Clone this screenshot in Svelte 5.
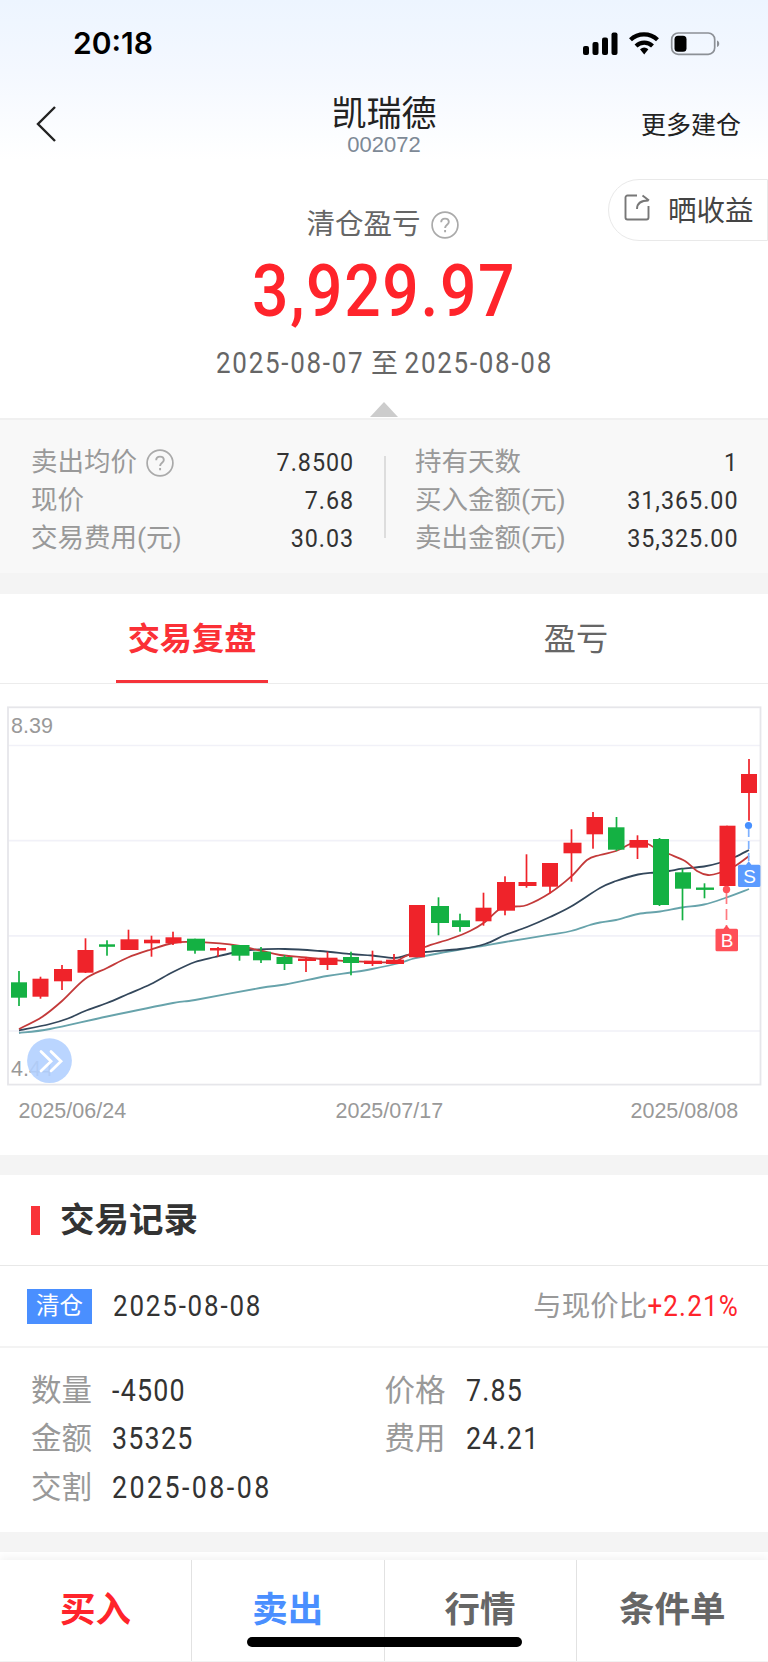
<script>
	// --------------- Position ---------------
	const leftStats = [
		{ label: '卖出均价', value: '7.8500', help: true },
		{ label: '现价', value: '7.68' },
		{ label: '交易费用(元)', value: '30.03' }
	];
	const rightStats = [
		{ label: '持有天数', value: '1' },
		{ label: '买入金额(元)', value: '31,365.00' },
		{ label: '卖出金额(元)', value: '35,325.00' }
	];
	const details = [
		{ label: '数量', value: '-4500' },
		{ label: '价格', value: '7.85' },
		{ label: '金额', value: '35325' },
		{ label: '费用', value: '24.21' },
		{ label: '交割', value: '2025-08-08', date: true }
	];

	let tabs = ['交易复盘', '盈亏'];
	let activeTab = 0;

	// --------------- K line chart ---------------
	// up, wick x, body left, body right, body top, body bottom, high, low
	const candles = [
		[0, 19, 11, 27, 982.3, 997.7, 971, 1006],
		[1, 40.5, 32.5, 48.5, 978.7, 996.7, 976.7, 998.7],
		[1, 62, 54, 72, 969, 981.3, 965, 990],
		[1, 85.5, 77.5, 93.5, 950, 972.7, 938.3, 973],
		[0, 107, 99, 115, 944.3, 946.8, 940.3, 955.7],
		[1, 128.5, 120.5, 138.5, 939.3, 950, 929.7, 950],
		[1, 151.5, 144, 160, 939.7, 943.3, 935.7, 956.7],
		[1, 173, 165.5, 181.5, 937.3, 943.3, 931.7, 945],
		[0, 195, 187, 205, 938.7, 950.7, 938.7, 953.7],
		[1, 218, 210, 226, 948, 950.5, 947, 956.7],
		[0, 239.5, 231.5, 249.5, 945, 955.7, 945, 960.7],
		[0, 261, 253, 271, 951.7, 960.3, 947, 963],
		[0, 284.5, 276.5, 292.5, 957, 964, 955, 970],
		[1, 306, 298, 316, 958.5, 961, 957, 972],
		[1, 327.5, 319.5, 337.5, 957.7, 965, 951.7, 970],
		[0, 351, 343, 359, 957, 963, 951.7, 975.3],
		[1, 372.5, 364, 382, 960.7, 964, 950.7, 966],
		[1, 394, 386, 404, 959.7, 964, 954, 964],
		[1, 417, 409, 425, 905, 957.3, 905, 957.3],
		[0, 438.5, 431, 449, 906, 923, 897.3, 935.3],
		[0, 460, 452, 470, 920.3, 927, 913.7, 931.7],
		[1, 483.5, 475.5, 491.5, 907.7, 921.3, 892.7, 925.7],
		[1, 505, 497, 515, 882, 910.7, 876.3, 915.3],
		[1, 526.5, 518.5, 536.5, 882, 886, 854.3, 887.7],
		[1, 550, 542, 558, 863, 886.7, 863, 893.3],
		[1, 571.5, 563.5, 581.5, 842.7, 853.3, 829.3, 881.7],
		[1, 593, 586.5, 603, 817, 834.3, 812, 848.7],
		[0, 616.5, 608, 624.5, 827.3, 849.7, 817, 851],
		[1, 637.5, 629.5, 648, 840, 847.7, 835.3, 859],
		[0, 659.5, 653, 669, 839, 905, 838, 906],
		[0, 682.5, 675, 691, 872.3, 888.7, 868.7, 920.3],
		[0, 704.5, 696, 714, 887.5, 889.9, 883.3, 898.3],
		[1, 727, 719.5, 735.5, 825.7, 886, 825.7, 886],
		[1, 749, 741, 757, 774, 793, 759, 820.7]
	];

	const averages = [
		{
			color: '#67a3ab',
			points: [[19, 1033], [50, 1029], [107, 1016.5], [173, 1003], [195, 1000], [260, 988], [285, 984.5], [327, 976], [351, 972.5], [372, 969], [400, 963], [412, 959], [430, 955], [460, 949.5], [485, 945.5], [505, 942], [550, 934.7], [571, 931], [590, 925], [600, 922.5], [616, 920], [638, 914], [660, 911.5], [682, 907.5], [704, 904.5], [725, 898], [749, 889]]
		},
		{
			color: '#33475b',
			points: [[19, 1030.5], [50, 1024], [68, 1018.5], [85, 1011], [107, 1003], [128, 994], [151, 984], [173, 972], [195, 962], [215, 957], [232, 953], [250, 950], [285, 949], [320, 951], [351, 954], [372, 955.5], [394, 958], [408, 955], [425, 952], [460, 949], [485, 944], [505, 935], [527, 927], [550, 917], [571, 906.5], [600, 888], [616, 881], [638, 874.5], [655, 872.5], [669, 871], [682, 868.7], [704, 866.5], [719, 863], [735, 857], [749, 850]]
		},
		{
			color: '#c33a3a',
			points: [[19, 1029], [42, 1017], [62, 1001], [85, 979], [107, 968], [128, 957.5], [151, 949.5], [173, 943], [190, 942], [220, 943.3], [240, 946], [262, 951], [280, 955], [306, 957.5], [340, 960.7], [372, 962], [394, 962], [404, 957], [425, 947], [450, 939], [470, 931], [485, 922], [500, 909], [515, 906.5], [527, 905], [550, 893], [571, 876.7], [587, 860], [600, 855], [616, 851], [629, 844.5], [638, 842], [648, 844], [655, 848], [669, 854], [685, 861], [697, 871], [708, 875], [719, 873], [735, 866], [749, 856]]
		}
	];

	// smooth curve through all points
	function curve(p) {
		let d = `M${p[0][0]},${p[0][1]}`;
		for (let i = 0; i < p.length - 1; i++) {
			const a = p[i - 1] || p[i];
			const b = p[i];
			const c = p[i + 1];
			const e = p[i + 2] || c;
			d += `C${b[0] + (c[0] - a[0]) / 6},${b[1] + (c[1] - a[1]) / 6} ${c[0] - (e[0] - b[0]) / 6},${c[1] - (e[1] - b[1]) / 6} ${c[0]},${c[1]}`;
		}
		return d;
	}
</script>

{#snippet help()}
	<svg class="help" width="28" height="28" viewBox="0 0 28 28" fill="none" stroke="#aaa" stroke-width="1.7">
		<circle cx="14" cy="14" r="12.9" />
		<path d="M10.2 11.3c0-2.3 1.6-3.7 3.8-3.7s3.8 1.4 3.8 3.4c0 2.7-3.7 2.9-3.7 6M14.1 19v2.2" stroke-width="1.9" />
	</svg>
{/snippet}

<main>
	<header>
		<div class="status">
			<span class="clock">20:18</span>
			<svg width="140" height="26" viewBox="580 30 140 26">
				<rect x="582" y="46" width="6" height="9" rx="2" />
				<rect x="591.5" y="42" width="6" height="13" rx="2" />
				<rect x="601" y="37.5" width="6" height="17.5" rx="2" />
				<rect x="610.5" y="32.5" width="6" height="22.5" rx="2" />
				<g fill="none" stroke="#000" stroke-width="4.2">
					<path d="M629.5 39.7a19.6 19.6 0 0 1 27 0" />
					<path d="M635 46a12 12 0 0 1 16.5 0" />
				</g>
				<path d="M639 49.2a6.8 6.8 0 0 1 8.4 0l-4.2 5.2z" />
				<rect x="670.7" y="33" width="43" height="21.3" rx="6.5" fill="none" stroke="#8c9096" stroke-width="1.7" />
				<rect x="673.5" y="35.7" width="12" height="16" rx="3.5" />
				<path d="M716 40.5c3 1 3 5.5 0 6.5z" fill="#8c9096" />
			</svg>
		</div>
		<div class="titlebar">
			<svg class="back" width="24" height="38" viewBox="0 0 24 38" fill="none" stroke="#222" stroke-width="2.4">
				<path d="M21 2 4 19l17 17" />
			</svg>
			<div class="title">
				<h1>凯瑞德</h1>
				<p>002072</p>
			</div>
			<span class="more">更多建仓</span>
		</div>
	</header>

	<section class="summary">
		<div class="share">
			<svg width="27" height="27" viewBox="0 0 27 27" fill="none" stroke="#777" stroke-width="1.9">
				<path d="M13 1.5H3.5a2 2 0 0 0-2 2v20a2 2 0 0 0 2 2h19a2 2 0 0 0 2-2V12" />
				<path d="M13 15c0-6 4-8.5 11.5-8.5M18.5 1.5l6.5 5" />
			</svg>
			<span>晒收益</span>
		</div>
		<div class="caption">清仓盈亏 {@render help()}</div>
		<div class="profit">3,929.97</div>
		<div class="period">2025-08-07 <b>至</b> 2025-08-08</div>
		<div class="arrow"></div>
	</section>

	<section class="stats">
		{#each [leftStats, rightStats] as column}
			<div class="column">
				{#each column as item}
					<div class="stat">
						<span class="label">{item.label}{#if item.help}{@render help()}{/if}</span>
						<span class="value">{item.value}</span>
					</div>
				{/each}
			</div>
		{/each}
	</section>

	<nav class="tabs">
		{#each tabs as tab, i}
			<button class:active={activeTab === i} on:click={() => (activeTab = i)}><span>{tab}</span></button>
		{/each}
	</nav>

	<section class="chart">
		<svg width="768" height="471" viewBox="0 684 768 471">
			<g fill="none" stroke="#f1f1f8" stroke-width="1.7">
				<path d="M8 745.5H760M8 840.7H760M8 935.8H760M8 1031H760" />
			</g>
			<rect x="8" y="707.3" width="752.5" height="377.3" fill="none" stroke="#e6e6ea" stroke-width="1.8" />
			<g class="axis">
				<text x="11" y="733">8.39</text>
				<text x="11" y="1075.5">4.44</text>
				<text x="18.5" y="1117.5">2025/06/24</text>
				<text x="335.5" y="1117.5">2025/07/17</text>
				<text x="630.5" y="1117.5">2025/08/08</text>
			</g>
			{#each averages as line}
				<path d={curve(line.points)} fill="none" stroke={line.color} stroke-width="1.8" />
			{/each}
			{#each candles as [up, x, left, right, top, bottom, high, low]}
				<g fill={up ? '#ef232a' : '#14b143'}>
					<rect x={x - 0.85} y={high} width="1.7" height={low - high} />
					<rect x={left} y={top} width={right - left} height={bottom - top} />
				</g>
			{/each}

			<!-- buy / sell markers -->
			<g fill="#ff5058">
				<path d="M726.5 893v35" stroke="#ff7a80" stroke-width="1.7" stroke-dasharray="11 5" />
				<circle cx="726.5" cy="889.5" r="3.7" />
				<path d="M717 928.7h6.5l3-3.5 3 3.5h7a1.5 1.5 0 0 1 1.5 1.5v19.5a1.5 1.5 0 0 1-1.5 1.5h-19.5a1.5 1.5 0 0 1-1.5-1.5v-19.5a1.5 1.5 0 0 1 1.5-1.5z" />
			</g>
			<g fill="#5b9bff">
				<path d="M748.7 829v35" stroke="#7fb1ff" stroke-width="1.7" stroke-dasharray="8 4" />
				<circle cx="748.5" cy="825.5" r="3.6" fill="#4790ff" />
				<path d="M739.5 864.7h6.5l2.7-3.5 2.7 3.5h7.5a1.5 1.5 0 0 1 1.5 1.5v19.3a1.5 1.5 0 0 1-1.5 1.5h-19.4a1.5 1.5 0 0 1-1.5-1.5v-19.3a1.5 1.5 0 0 1 1.5-1.5z" />
			</g>
			<text class="mark" x="727" y="947">B</text>
			<text class="mark" x="749.5" y="883">S</text>

			<circle cx="49.5" cy="1060.7" r="22.4" fill="#b3d0ff" fill-opacity="0.9" />
			<path d="M41 1051.5l10 9.7-10 9.7M51 1051.5l10 9.7-10 9.7" fill="none" stroke="#fff" stroke-width="2.8" stroke-linecap="round" />
		</svg>
	</section>

	<section class="records">
		<h2><span>交易记录</span></h2>
		<div class="record-head">
			<span class="tag">清仓</span>
			<span class="date">2025-08-08</span>
			<span class="compare">与现价比<em>+2.21%</em></span>
		</div>
		<div class="details">
			{#each details as item}
				<div class="detail">
					<span class="label">{item.label}</span>
					<span class="value" class:date={item.date}>{item.value}</span>
				</div>
			{/each}
		</div>
	</section>

	<footer>
		<span class="buy">买入</span>
		<span class="sell">卖出</span>
		<span>行情</span>
		<span>条件单</span>
		<i class="home"></i>
	</footer>
</main>

<style>
	:global(body) {
		margin: 0;
		background: #f4f4f4;
	}

	main {
		width: 768px;
		height: 1662px;
		overflow: hidden;
		display: flex;
		flex-direction: column;
		font-family: Roboto, 'Noto Sans CJK SC', sans-serif;
		color: #333;
	}

	svg {
		display: block;
		flex: none;
	}

	/* --------------- Header --------------- */
	header {
		height: 160px;
		background: linear-gradient(#edf5ff, #f4f8ff 45%, #fff);
	}

	.status {
		height: 88px;
		display: flex;
		align-items: center;
		justify-content: space-between;
		padding: 0 47px 2px 73px;
		box-sizing: border-box;
	}

	.clock {
		font: 600 30px Inter, sans-serif;
		color: #000;
	}

	.titlebar {
		display: grid;
		grid-template-columns: 1fr 200px 1fr;
		align-items: center;
		height: 72px;
		padding: 0 27px 0 34px;
	}

	.title {
		text-align: center;
		margin-left: -7px;
		padding-top: 4px;
	}

	h1 {
		margin: 0;
		font-size: 35px;
		line-height: 37px;
		font-weight: 400;
		color: #222;
	}

	.title p {
		margin: 0;
		font: 22px/23px 'Liberation Sans', sans-serif;
		color: #7d8996;
	}

	.more {
		justify-self: end;
		margin-top: -2px;
		font-size: 25px;
		color: #222;
	}

	/* --------------- Profit summary --------------- */
	.summary {
		position: relative;
		height: 260px;
		box-sizing: border-box;
		background: #fff;
		display: flex;
		flex-direction: column;
		align-items: center;
		border-bottom: 2px solid #f0f0f0;
	}

	.share {
		position: absolute;
		top: 19px;
		right: 0;
		width: 160px;
		height: 62px;
		box-sizing: border-box;
		border: 1px solid #e9e9e9;
		border-radius: 31px 0 0 31px;
		display: flex;
		align-items: center;
		gap: 17px;
		padding-left: 15px;
		font-size: 28.5px;
		color: #444;
	}

	.share svg {
		margin-top: -6px;
	}

	.share span {
		margin-top: -4px;
	}

	.caption {
		display: flex;
		align-items: center;
		gap: 10px;
		height: 40px;
		margin-top: 41px;
		margin-left: -3px;
		font-size: 28.5px;
		color: #666;
	}

	.caption .help {
		margin-top: 7px;
	}

	.profit {
		margin-top: 12px;
		font-size: 73px;
		line-height: 76px;
		font-weight: 500;
		letter-spacing: 0.025em;
		transform: scaleX(0.88);
		color: #ff242b;
	}

	.period {
		margin-top: 16px;
		font-size: 29.5px;
		line-height: 36px;
		letter-spacing: 0.067em;
		transform: scaleX(0.88);
		color: #666;
	}

	.period b {
		display: inline-block;
		font-weight: 400;
		font-size: 27px;
		letter-spacing: 0;
		transform: scaleX(1.13);
	}

	.arrow {
		margin: auto 0 1px;
		border: 14px solid transparent;
		border-top: 0;
		border-bottom: 15px solid #ccc;
	}

	/* --------------- Stats --------------- */
	.stats {
		display: flex;
		height: 153px;
		background: #f8f8f8;
		border-bottom: 21px solid #f4f4f4;
	}

	.column {
		flex: 1;
		padding: 23px 31px 0 31px;
	}

	.column + .column {
		position: relative;
	}

	.column + .column::before {
		content: '';
		position: absolute;
		left: 0;
		top: 36px;
		width: 1.5px;
		height: 82px;
		background: #ddd;
	}

	.stat {
		display: flex;
		justify-content: space-between;
		align-items: center;
		height: 38px;
		font-size: 26.5px;
		line-height: 38px;
	}

	.stat .label {
		display: flex;
		align-items: center;
		gap: 9px;
		color: #999;
	}

	.stat .help {
		margin-top: 1px;
	}

	.stat .value {
		letter-spacing: 0.042em;
		margin-right: -1px;
		transform: scaleX(0.88);
		transform-origin: right;
	}

	/* --------------- Tabs --------------- */
	.tabs {
		display: flex;
		height: 90px;
		box-sizing: border-box;
		background: #fff;
		border-bottom: 1.5px solid #ececec;
	}

	.tabs button {
		flex: 1;
		display: flex;
		justify-content: center;
		padding: 0;
		border: none;
		background: none;
		font: inherit;
		font-size: 32.2px;
		color: #666;
	}

	.tabs span {
		height: 100%;
		box-sizing: border-box;
		padding: 2px 12px 0;
		line-height: 87px;
		border-bottom: 3px solid transparent;
	}

	.tabs .active {
		font-weight: 600;
		color: #fb3036;
	}

	.tabs .active span {
		border-color: #f5333a;
	}

	/* --------------- Chart --------------- */
	.chart {
		background: #fff;
		border-bottom: 20px solid #f4f4f4;
	}

	.axis {
		font: 21.5px 'Liberation Sans', sans-serif;
		fill: #999;
	}

	.mark {
		font: 19px 'Liberation Sans', sans-serif;
		fill: #fff;
		text-anchor: middle;
	}

	/* --------------- Trade records --------------- */
	.records {
		background: #fff;
		height: 357px;
		border-bottom: 20px solid #f4f4f4;
	}

	h2 {
		display: flex;
		align-items: center;
		gap: 20px;
		height: 91px;
		box-sizing: border-box;
		margin: 0;
		padding-left: 31px;
		font-size: 34.5px;
		font-weight: 600;
		border-bottom: 1px solid #e8e8e8;
	}

	h2::before {
		content: '';
		width: 9px;
		height: 29px;
		background: #f93439;
	}

	h2 span {
		margin-top: -6px;
	}

	.record-head {
		display: flex;
		align-items: center;
		height: 82px;
		box-sizing: border-box;
		padding: 0 31px 0 27px;
		font-size: 29.5px;
		border-bottom: 2px solid #f3f3f3;
	}

	.tag {
		width: 65px;
		height: 35px;
		line-height: 34px;
		text-align: center;
		font-size: 23.5px;
		color: #fff;
		background: #4a8fff;
		margin-right: 21px;
	}

	.record-head .date {
		letter-spacing: 0.07em;
		transform: scaleX(0.88);
		transform-origin: left;
	}

	.compare {
		margin: -6px 0 0 auto;
		font-size: 28.5px;
		color: #999;
	}

	em {
		display: inline-block;
		margin-left: -12px;
		margin-right: -2px;
		font-size: 29.5px;
		font-style: normal;
		letter-spacing: 0.045em;
		transform: scaleX(0.88);
		transform-origin: right;
		color: #ff242b;
	}

	.details {
		display: grid;
		grid-template-columns: 353.5px 1fr;
		padding: 19px 0 0 31px;
	}

	.detail {
		display: flex;
		gap: 20px;
		height: 48.3px;
		line-height: 48.3px;
		font-size: 30.5px;
	}

	.detail .label {
		color: #999;
	}

	.detail .value {
		letter-spacing: 0.045em;
		transform: scaleX(0.88);
		transform-origin: left;
	}

	.detail .value.date {
		letter-spacing: 0.09em;
	}

	/* --------------- Bottom bar --------------- */
	footer {
		position: relative;
		display: flex;
		height: 101px;
		margin-top: 8px;
		background: #fff;
		box-shadow: 0 -3px 8px rgba(0, 0, 0, 0.05), 0 -8px 0 #fff;
		font-size: 35.5px;
		font-weight: 600;
		line-height: 101px;
		text-align: center;
		color: #666;
	}

	footer span {
		flex: 1;
		box-sizing: border-box;
	}

	footer span + span {
		border-left: 1.5px solid #e2e2e2;
	}

	footer .buy {
		color: #ff242b;
	}

	footer .sell {
		color: #4a8fff;
	}

	.home {
		position: absolute;
		left: 247px;
		bottom: 14px;
		width: 275px;
		height: 10px;
		border-radius: 5px;
		background: #000;
	}
</style>
